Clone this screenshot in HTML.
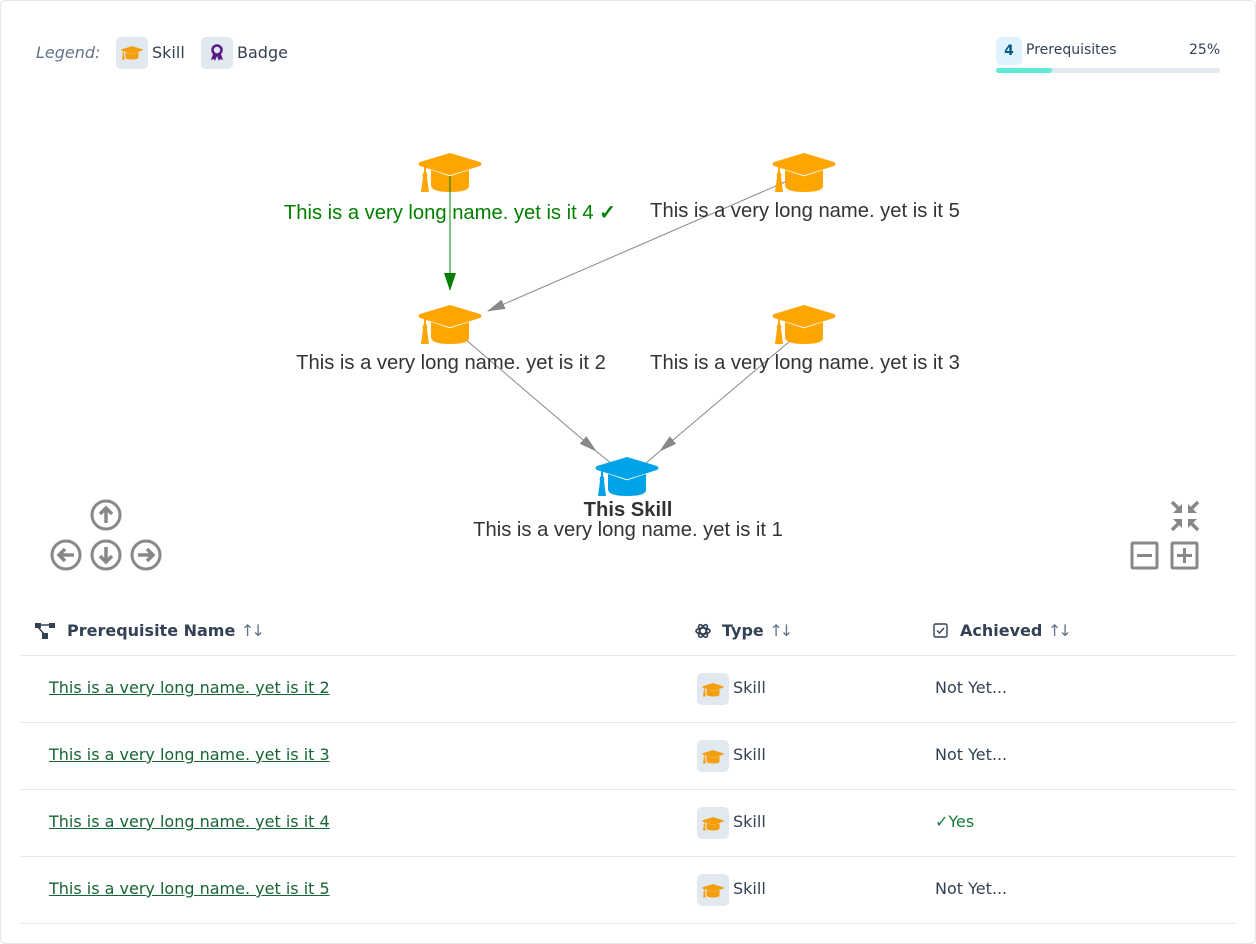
<!DOCTYPE html>
<html><head><meta charset="utf-8"><style>
body{margin:0;background:#fff;font-family:"DejaVu Sans","Liberation Sans",sans-serif;color:#334155;}
.card{position:absolute;left:0;top:1px;width:1256px;height:943px;overflow:hidden}
.bd{position:absolute;left:0;top:0;width:1254px;height:942px;border:1px solid #e5e7eb;border-radius:6px}
.abs{position:absolute}
.chip{position:absolute;width:32px;height:32px;border-radius:5px;background:#e2e8f0}
.lbl{position:absolute;font-family:"Liberation Sans",sans-serif;font-size:20.2px;color:#333;white-space:nowrap;transform:translateX(-50%)}
.row{position:absolute;left:20px;width:1216px;height:66px;border-bottom:1px solid #e2e8f0;font-size:16px}
.row a{position:absolute;left:29px;top:22px;color:#166534;text-decoration:underline}
.row .t{position:absolute;left:713px;top:22px}
.row .a{position:absolute;left:915px;top:22px}
.th{position:absolute;top:620px;font-size:16px;font-weight:bold;color:#334155}
.sort{font-weight:normal;color:#64748b;font-size:16px;letter-spacing:-3px}
</style></head><body><div class="bd"></div><div class="card">
<svg width="0" height="0" style="position:absolute"><defs>
<symbol id="hat" viewBox="0 0 64 40">
<path d="M32 0 L62 9 Q65 11 62 13 L33 22 Q32 22.5 31 22 L2 13 Q-1 11 2 9 Z"/>
<path d="M13 17 L31 23 Q32 23.5 33 23 L51 17 L51 33 Q51 39 32 39 Q13 39 13 32 Z"/>
<path d="M6 12 L8 12 L8 19 Q10 21 9 24 L11 39 L3 39 L5 24 Q4 21 6 19 Z"/>
</symbol></defs></svg>

<div class="abs" style="left:36px;top:42px;font-style:italic;color:#64748b;font-size:16px">Legend:</div>
<div class="chip" style="left:116px;top:36px"><svg width="22" height="14" style="margin:9px 5px" fill="#f59e0b"><use href="#hat"/></svg></div>
<div class="abs" style="left:152px;top:42px;font-size:16px">Skill</div>
<div class="chip" style="left:201px;top:36px"><svg width="32" height="32" viewBox="0 0 32 32"><circle cx="16" cy="13" r="4.5" fill="none" stroke="#581c87" stroke-width="2.5"/><path d="M12 17 L10 23 L13 22 L14 24 L16 19 L18 24 L19 22 L22 23 L20 17" fill="#581c87"/></svg></div>
<div class="abs" style="left:237px;top:42px;font-size:16px">Badge</div>

<div class="abs" style="left:996px;top:36px;width:26px;height:28px;background:#e0f2fe;border-radius:5px;color:#075985;font-weight:bold;font-size:14px;text-align:center;line-height:28px">4</div>
<div class="abs" style="left:1026px;top:41px;font-size:14px">Prerequisites</div>
<div class="abs" style="left:1189px;top:41px;font-size:14px">25%</div>
<div class="abs" style="left:996px;top:67px;width:224px;height:5px;background:#e2e8f0;border-radius:3px"><div style="width:56px;height:5px;background:#5eead4;border-radius:3px"></div></div>

<svg class="abs" style="left:0;top:0" width="1256" height="600">
<defs>
<marker id="gr" markerWidth="18" markerHeight="10" refX="17" refY="5" orient="auto" markerUnits="userSpaceOnUse"><path d="M0 0L18 5L0 10Z" fill="#888"/></marker>
<marker id="ag2" markerWidth="18" markerHeight="12" refX="17" refY="6" orient="auto" markerUnits="userSpaceOnUse"><path d="M0 0L18 6L0 12Z" fill="green"/></marker></defs>
<line x1="450" y1="190" x2="450" y2="289" stroke="green" stroke-width="1" marker-end="url(#ag2)"/>
<line x1="785" y1="181" x2="488" y2="310" stroke="#888" marker-end="url(#gr)"/>
<line x1="465" y1="338" x2="596" y2="450" stroke="#888" marker-end="url(#gr)"/>
<line x1="790" y1="340" x2="660" y2="450" stroke="#888" marker-end="url(#gr)"/>
<line x1="596" y1="450" x2="612" y2="463" stroke="#888"/>
<line x1="660" y1="450" x2="645" y2="463" stroke="#888"/>
<svg x="418" y="152" width="64" height="40" fill="#ffa500"><use href="#hat"/></svg>
<svg x="772" y="152" width="64" height="40" fill="#ffa500"><use href="#hat"/></svg>
<svg x="418" y="304" width="64" height="40" fill="#ffa500"><use href="#hat"/></svg>
<svg x="772" y="304" width="64" height="40" fill="#ffa500"><use href="#hat"/></svg>
<svg x="595" y="456" width="64" height="40" fill="#00a2e8"><use href="#hat"/></svg>
<line x1="450" y1="175" x2="450" y2="192" stroke="green"/>
</svg>
<div class="lbl" style="left:450px;top:199px;color:green">This is a very long name. yet is it 4 <b>✓</b></div>
<div class="lbl" style="left:805px;top:199px">This is a very long name. yet is it 5</div>
<div class="lbl" style="left:451px;top:351px">This is a very long name. yet is it 2</div>
<div class="lbl" style="left:805px;top:351px">This is a very long name. yet is it 3</div>
<div class="lbl" style="left:628px;top:498px;font-weight:bold">This Skill</div>
<div class="lbl" style="left:628px;top:518px">This is a very long name. yet is it 1</div>

<svg class="abs" style="left:49px;top:497px" width="115" height="75" fill="none" stroke="#888" stroke-width="3">
<circle cx="57" cy="17" r="14"/><path d="M57 25V10M51 16l6-6 6 6" stroke-width="3.5"/>
<circle cx="17" cy="57" r="14"/><path d="M25 57H10M16 51l-6 6 6 6" stroke-width="3.5"/>
<circle cx="57" cy="57" r="14"/><path d="M57 49V64M51 58l6 6 6-6" stroke-width="3.5"/>
<circle cx="97" cy="57" r="14"/><path d="M89 57H104M98 51l6 6-6 6" stroke-width="3.5"/>
</svg>
<svg class="abs" style="left:1127px;top:497px" width="75" height="75" fill="none" stroke="#888" stroke-width="3">
<g stroke-width="3.5"><path d="M45 4l8 8M71 4l-8 8M45 32l8-8M71 32l-8-8"/></g>
<g fill="#888" stroke="none"><path d="M55 6V15H46Z"/><path d="M61 6V15H70Z"/><path d="M55 30V21H46Z"/><path d="M61 30V21H70Z"/></g>
<rect x="5" y="45" width="25" height="25" rx="1"/><path d="M10 57.5h15"/>
<rect x="45" y="45" width="25" height="25" rx="1"/><path d="M50 57.5h15M57.5 50v15"/>
</svg>

<svg class="abs" style="left:35px;top:621px" width="20" height="18" fill="#334155"><rect x="0" y="1" width="6" height="5"/><rect x="14" y="1" width="6" height="5"/><rect x="7" y="11" width="6" height="6"/><path d="M6 3h8M3 5l6 7" stroke="#334155" stroke-width="1.5"/></svg>
<div class="th" style="left:67px">Prerequisite Name <span class="sort">↑↓</span></div>
<svg class="abs" style="left:695px;top:622px" width="16" height="16" fill="none" stroke="#334155" stroke-width="1.6"><ellipse cx="8" cy="8" rx="7" ry="3"/><ellipse cx="8" cy="8" rx="7" ry="3" transform="rotate(60 8 8)"/><ellipse cx="8" cy="8" rx="7" ry="3" transform="rotate(-60 8 8)"/></svg>
<div class="th" style="left:722px">Type <span class="sort">↑↓</span></div>
<svg class="abs" style="left:933px;top:622px" width="15" height="15" fill="none" stroke="#334155" stroke-width="1.4"><rect x="1" y="1" width="13" height="13" rx="1.5"/><path d="M4 7.5l2.5 2.5 4.5-5"/></svg>
<div class="th" style="left:960px">Achieved <span class="sort">↑↓</span></div>
<div class="abs" style="left:20px;top:654px;width:1216px;border-top:1px solid #e2e8f0"></div>

<div class="row" style="top:655px"><a>This is a very long name. yet is it 2</a><div class="chip" style="left:677px;top:17px"><svg width="22" height="14" style="margin:10px 5px" fill="#f59e0b"><use href="#hat"/></svg></div><span class="t">Skill</span><span class="a">Not Yet...</span></div>
<div class="row" style="top:722px"><a>This is a very long name. yet is it 3</a><div class="chip" style="left:677px;top:17px"><svg width="22" height="14" style="margin:10px 5px" fill="#f59e0b"><use href="#hat"/></svg></div><span class="t">Skill</span><span class="a">Not Yet...</span></div>
<div class="row" style="top:789px"><a>This is a very long name. yet is it 4</a><div class="chip" style="left:677px;top:17px"><svg width="22" height="14" style="margin:10px 5px" fill="#f59e0b"><use href="#hat"/></svg></div><span class="t">Skill</span><span class="a" style="color:#15803d">✓Yes</span></div>
<div class="row" style="top:856px"><a>This is a very long name. yet is it 5</a><div class="chip" style="left:677px;top:17px"><svg width="22" height="14" style="margin:10px 5px" fill="#f59e0b"><use href="#hat"/></svg></div><span class="t">Skill</span><span class="a">Not Yet...</span></div>
</div></body></html>
